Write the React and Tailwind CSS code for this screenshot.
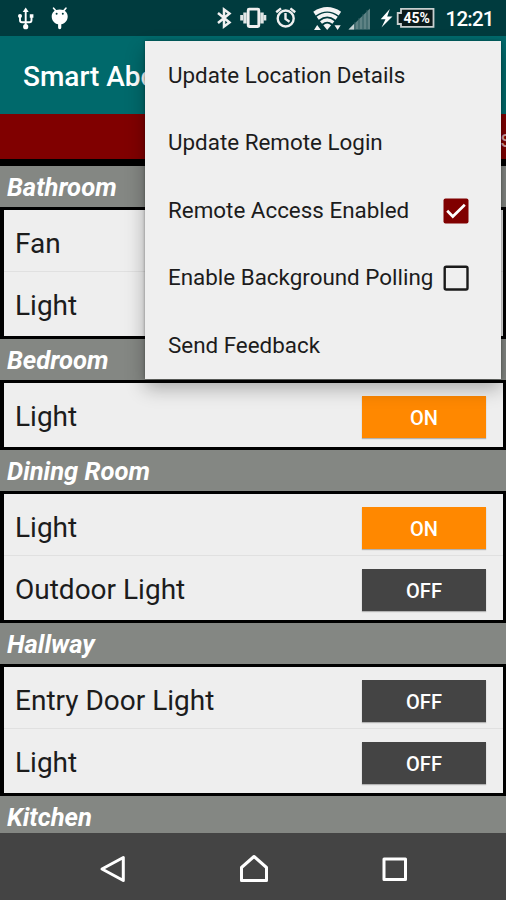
import React, { useState } from "react";

const initialRooms = [
  {
    name: "Bathroom",
    devices: [
      { name: "Fan", on: false },
      { name: "Light", on: false },
    ],
  },
  { name: "Bedroom", devices: [{ name: "Light", on: true }] },
  {
    name: "Dining Room",
    devices: [
      { name: "Light", on: true },
      { name: "Outdoor Light", on: false },
    ],
  },
  {
    name: "Hallway",
    devices: [
      { name: "Entry Door Light", on: false },
      { name: "Light", on: false },
    ],
  },
  { name: "Kitchen", devices: [] },
];

const StatusBar = () => (
  <div className="h-9 shrink-0 bg-[#003b3e] text-white">
    <svg width="506" height="36" viewBox="0 0 506 36" fill="none">
      {/* USB */}
      <g stroke="#fff" strokeWidth="1.9">
        <path d="M25.7 11v15M20 17v3.2q0 2 2 2h7.500q2 0 2-2V17" />
      </g>
      <path d="M25.700 7.500l3 4.500h-6z" fill="#fff" />
      <circle cx="25.700" cy="26.700" r="2.600" fill="#fff" />
      <circle cx="20" cy="16" r="2" fill="#fff" />
      <path d="M29.800 14.200h3.600v3.600h-3.600z" fill="#fff" />
      {/* Debug bug */}
      <g>
        <path
          d="M53.600 8.200l2.200 2.600M65.900 8.200l-2.200 2.600"
          stroke="#fff"
          strokeWidth="1.700"
          strokeLinecap="round"
        />
        <path
          d="M59.700 9.500c5 0 8 2.800 8 7 0 4.300-3.200 7.300-6.400 7.700v3.300q0 1.800-1.600 1.800t-1.600-1.800v-3.300c-3.200-.4-6.400-3.400-6.400-7.700 0-4.200 3-7 8-7z"
          fill="#fff"
        />
        <circle cx="56.600" cy="13.700" r="1" fill="#003b3e" />
        <circle cx="62.800" cy="13.700" r="1" fill="#003b3e" />
      </g>
      {/* Bluetooth */}
      <path
        d="M218 13l11.500 9.500-5.500 4V9.500l5.500 4L218 23"
        stroke="#f0f0f0"
        strokeWidth="2.500"
      />
      {/* Vibrate */}
      <rect x="248.200" y="9.200" width="10.600" height="17.300" rx="1" stroke="#f0f0f0" strokeWidth="2.800" />
      <path
        d="M245 12.500v11M262 12.500v11"
        stroke="#e0e6e6"
        strokeWidth="3.400"
      />
      <path d="M241.600 15v5.500M264.900 15v5.500" stroke="#e0e6e6" strokeWidth="2.800" />
      {/* Alarm */}
      <g stroke="#f0f0f0" strokeWidth="2.400">
        <circle cx="285.700" cy="18.500" r="8" />
        <path d="M285.500 13v6l4 2.800M276.200 12.300l4.800-3.900M295.200 12.300l-4.800-3.900" />
      </g>
      {/* Wifi */}
      <g stroke="#f4f4f4">
        <path d="M314.500 13.600q12.700-8.500 25.400 0" strokeWidth="4.400" />
        <path d="M317.700 18.200q9.500-7 19 0" strokeWidth="3.600" />
        <path d="M321 22.500q6.200-5 12.400 0" strokeWidth="3.200" />
      </g>
      <path d="M323.300 25.200q3.900-3.300 7.800 0l-3.900 4.700z" fill="#f4f4f4" />
      <path d="M317.200 25l3.700 5h-6.900zM334.500 25.300h6.200l-3.100 4.700z" fill="#f4f4f4" />
      {/* Signal */}
      <path d="M348.500 29.500L370 8.500v21z" fill="#5f8385" />
      <path d="M348.500 29.500l5.500-5.400v5.400z" fill="#c5d2d3" />
      <path
        d="M355 22v8M359 18v12M363 14v16M367 10v20"
        stroke="#2f5d60"
        strokeWidth="1"
      />
      {/* Battery */}
      <path d="M389.800 9l-9.100 10.300h4.800l-4 8.200 11-11h-5.300z" fill="#fff" />
      <path
        d="M401 8.800h32.500v18H401V24h-3.300V13H401z"
        fill="#0a1a1b"
        stroke="#c8cfcf"
        strokeWidth="1.800"
      />
      <text
        x="403.500"
        y="23.200"
        fill="#fff"
        className="font-['Roboto',sans-serif] text-[14.500px] font-bold"
        textLength="26.500"
        lengthAdjust="spacingAndGlyphs"
      >
        45%
      </text>
      <text
        x="445.500"
        y="26.300"
        fill="#fff"
        className="font-['Roboto',sans-serif] text-[20.500px] font-medium"
        textLength="49"
      >
        12:21
      </text>
    </svg>
  </div>
);

const DeviceRow = ({ device, onToggle }) => (
  <li className="flex h-[62px] items-start justify-between pt-[13px] pr-[17px] pl-[11px]">
    <span className="text-[28px] leading-[42px] text-[#1c1c1c]">
      {device.name}
    </span>
    <button
      onClick={onToggle}
      className={`h-[42px] w-[124px] pt-px text-[20px] leading-none font-medium text-white shadow-[0_1px_1px_rgba(0,0,0,0.25)] ${
        device.on ? "bg-[#ff8800]" : "bg-[#444444]"
      }`}
    >
      {device.on ? "ON" : "OFF"}
    </button>
  </li>
);

const Room = ({ room, onToggle }) => (
  <section className="shrink-0">
    <h2 className="h-[41px] bg-[#848783] pl-[7px] text-[25.600px] leading-[43px] font-bold text-white italic">
      {room.name}
    </h2>
    {room.devices.length > 0 && (
      <div className="border-y-3 border-r-3 border-l-4 border-black bg-[#eeeeee] pb-0.5">
        <ul className="divide-y divide-[#e0e0e0]">
          {room.devices.map((device, index) => (
            <DeviceRow
              key={index}
              device={device}
              onToggle={() => onToggle(room.name, index)}
            />
          ))}
        </ul>
      </div>
    )}
  </section>
);

const Checkbox = ({ checked }) => (
  <svg width="26" height="26" viewBox="0 0 26 26" fill="none">
    {checked ? (
      <>
        <rect x="0.500" y="0.500" width="25" height="25" rx="2" fill="#800000" />
        <path d="M4.200 12.800l5.600 5.700L21.800 6.700" stroke="#fff" strokeWidth="2.700" />
      </>
    ) : (
      <rect x="1.700" y="1.700" width="22.800" height="22.800" rx="1.500" stroke="#1a1a1a" strokeWidth="2.400" />
    )}
  </svg>
);

const OptionsMenu = () => {
  const [remoteAccess, setRemoteAccess] = useState(true);
  const [polling, setPolling] = useState(false);

  const items = [
    { label: "Update Location Details" },
    { label: "Update Remote Login" },
    {
      label: "Remote Access Enabled",
      checked: remoteAccess,
      onClick: () => setRemoteAccess(!remoteAccess),
    },
    {
      label: "Enable Background Polling",
      checked: polling,
      onClick: () => setPolling(!polling),
    },
    { label: "Send Feedback" },
  ];

  return (
    <div className="absolute top-[41px] left-[145px] w-[356px] bg-[#efefef] shadow-[0_9px_18px_rgba(0,0,0,0.3),0_0_3px_rgba(0,0,0,0.35)]">
      {items.map((item) => (
        <button
          key={item.label}
          onClick={item.onClick}
          className="flex h-[67.500px] w-full items-center justify-between pt-[2px] pr-8 pl-[23px] text-left text-[22.400px] whitespace-nowrap text-[#1c1c1c]"
        >
          {item.label}
          {item.checked !== undefined && <Checkbox checked={item.checked} />}
        </button>
      ))}
    </div>
  );
};

const NavigationBar = () => (
  <div className="flex h-[67px] shrink-0 items-center justify-center gap-[112px] bg-[#444444] pt-1 pl-0.5">
    <svg width="28" height="32" viewBox="0 0 28 32" fill="none" stroke="#fff" strokeWidth="3" strokeLinejoin="round">
      <path d="M24.300 4.500v23L3 16z" />
    </svg>
    <svg width="30" height="32" viewBox="0 0 30 32" fill="none" stroke="#fff" strokeWidth="3" strokeLinejoin="round">
      <path d="M2.500 14.500L15 3.500l12.500 11v13h-25z" />
    </svg>
    <svg width="28" height="32" viewBox="0 0 28 32" fill="none" stroke="#fff" strokeWidth="3" strokeLinejoin="round">
      <path d="M3 6h21.500v20.500H3z" />
    </svg>
  </div>
);

const App = () => {
  const [rooms, setRooms] = useState(initialRooms);

  const handleToggle = (roomName, index) => {
    setRooms((prev) =>
      prev.map((room) =>
        room.name !== roomName
          ? room
          : {
              ...room,
              devices: room.devices.map((device, i) =>
                i === index ? { ...device, on: !device.on } : device
              ),
            }
      )
    );
  };

  return (
    <div className="relative flex h-[900px] w-[506px] flex-col overflow-hidden bg-black font-['Roboto',sans-serif]">
      <StatusBar />
      <header className="flex h-[78px] shrink-0 items-center bg-[#00696b] pt-[3px] pl-[23px]">
        <h1 className="text-[28px] font-medium text-white">Smart Abo</h1>
      </header>
      <div className="flex h-[45px] shrink-0 items-center justify-end bg-[#800000] pt-2">
        <span className="-mr-1.5 text-[23px] text-[#d9a3a3]">s</span>
      </div>
      <main className="min-h-0 flex-1 overflow-hidden pt-[7px]">
        {rooms.map((room) => (
          <Room key={room.name} room={room} onToggle={handleToggle} />
        ))}
      </main>
      <NavigationBar />
      <OptionsMenu />
    </div>
  );
};

export default App;
